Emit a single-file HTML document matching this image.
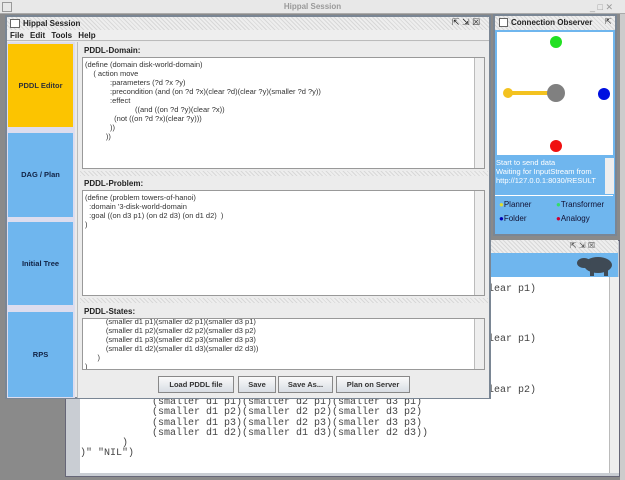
<!DOCTYPE html>
<html><head><style>
*{margin:0;padding:0;box-sizing:border-box}
body{width:625px;height:480px;position:relative;overflow:hidden;background:#8a8a8a;font-family:"Liberation Sans",sans-serif;font-size:8px;color:#222}
.a{position:absolute}
.mono{font-family:"Liberation Mono",monospace;font-size:10px;color:#444;white-space:pre;line-height:10.3px}
.ta{background:#fff;border:1px solid #999}
.sb{position:absolute;right:0;top:0;bottom:0;width:10px;background:#eee;border-left:1px solid #bbb}
.txt{white-space:pre;line-height:9px;font-size:7.5px;color:#333;padding:2px}
.lbl{font-weight:bold;font-size:8px;color:#222}
.btn{position:absolute;top:376px;height:17px;border:1px solid #888;background:linear-gradient(#fafafa,#d8dde4);font-size:7.5px;font-weight:bold;text-align:center;line-height:15px;color:#333}
.tab{position:absolute;left:8px;width:65px;font-weight:bold;font-size:7.5px;text-align:center}
.hatch{background:repeating-linear-gradient(45deg,#d8d8d8 0 1px,#eee 1px 3px)}
</style></head><body>
<div class="a" style="left:0;top:0;width:625px;height:14px;background:#e8e8e8;border-bottom:1px solid #aaa"></div>
<div class="a" style="left:2px;top:2px;width:10px;height:10px;border:1px solid #999"></div>
<div class="a" style="left:0;top:2px;width:625px;text-align:center;font-size:8px;font-weight:bold;color:#999">Hippal Session</div>
<div class="a" style="left:590px;top:2px;font-size:9px;color:#999">_ □ ✕</div>
<div class="a" style="left:620px;top:14px;width:5px;height:466px;background:#ccc"></div>

<div class="a" style="left:65px;top:240px;width:555px;height:237px;background:#c9cdd3;border:1px solid #667"></div>
<div class="a hatch" style="left:490px;top:240px;width:128px;height:13px"></div>
<div class="a" style="left:570px;top:241px;font-size:8px;color:#444">⇱ ⇲ ☒</div>
<div class="a" style="left:490px;top:253px;width:128px;height:24px;background:#6fb6ee"></div>
<svg class="a" style="left:568px;top:253px" width="48" height="24"><ellipse cx="30" cy="12" rx="14" ry="8" fill="#3f4a55"/><ellipse cx="16" cy="10" rx="7" ry="5" fill="#3f4a55"/><rect x="22" y="16" width="4" height="7" fill="#3f4a55"/><rect x="36" y="16" width="4" height="7" fill="#3f4a55"/></svg>
<div class="a" style="left:80px;top:277px;width:529px;height:196px;background:#fff"></div>
<div class="a" style="left:609px;top:277px;width:10px;height:196px;background:#eee;border-left:1px solid #bbb"></div>
<div class="a mono" style="left:488px;top:285px">lear p1)</div>
<div class="a mono" style="left:488px;top:335px">lear p1)</div>
<div class="a mono" style="left:488px;top:386px">lear p2)</div>
<div class="a mono" style="left:80px;top:398px">            (smaller d1 p1)(smaller d2 p1)(smaller d3 p1)
            (smaller d1 p2)(smaller d2 p2)(smaller d3 p2)
            (smaller d1 p3)(smaller d2 p3)(smaller d3 p3)
            (smaller d1 d2)(smaller d1 d3)(smaller d2 d3))
       )
)" "NIL")</div>

<div class="a" style="left:493px;top:14px;width:124px;height:222px;background:#6fb6ee;border:2px solid #7a8694"></div>
<div class="a hatch" style="left:495px;top:16px;width:120px;height:14px"></div>
<div class="a" style="left:499px;top:18px;width:9px;height:9px;border:1px solid #666;background:#fff"></div>
<div class="a lbl" style="left:511px;top:18px">Connection Observer</div>
<div class="a" style="left:605px;top:17px;font-size:8px">⇱</div>
<svg class="a" style="left:497px;top:32px" width="116" height="123"><rect width="116" height="123" fill="#fff"/><line x1="11" y1="61" x2="59" y2="61" stroke="#f3c21f" stroke-width="4"/><circle cx="11" cy="61" r="5" fill="#f3c21f"/><circle cx="59" cy="61" r="9" fill="#808080"/><circle cx="59" cy="10" r="6" fill="#22e022"/><circle cx="107" cy="62" r="6" fill="#0010e0"/><circle cx="59" cy="114" r="6" fill="#f01010"/></svg>
<div class="a" style="left:495px;top:157px;width:118px;height:38px;font-size:7.5px;line-height:9px;color:#fff;padding:1px;white-space:pre;overflow:hidden">Start to send data
Waiting for InputStream from
http://127.0.0.1:8030/RESULT</div>
<div class="a" style="left:605px;top:158px;width:9px;height:36px;background:#eee"></div>
<div class="a" style="left:495px;top:195px;width:118px;height:1px;background:#fff"></div>
<div class="a" style="left:499px;top:200px;font-size:8px;color:#113"><span style="color:#dd3">●</span>Planner</div>
<div class="a" style="left:556px;top:200px;font-size:8px;color:#113"><span style="color:#3d6">●</span>Transformer</div>
<div class="a" style="left:499px;top:214px;font-size:8px;color:#113"><span style="color:#00b">●</span>Folder</div>
<div class="a" style="left:556px;top:214px;font-size:8px;color:#113"><span style="color:#c03">●</span>Analogy</div>

<div class="a" style="left:5px;top:15px;width:486px;height:384px;background:#eaeaea;border:2px solid #7a8694"></div>
<div class="a hatch" style="left:7px;top:17px;width:482px;height:13px"></div>
<div class="a" style="left:10px;top:19px;width:10px;height:9px;border:1px solid #666;background:#fff"></div>
<div class="a lbl" style="left:23px;top:19px">Hippal Session</div>
<div class="a" style="left:452px;top:17px;font-size:9px">⇱ ⇲ ☒</div>
<div class="a" style="left:7px;top:30px;width:482px;height:11px;background:#eee;border-bottom:1px solid #bbb"></div>
<div class="a lbl" style="left:10px;top:31px;word-spacing:4px">File Edit Tools Help</div>
<div class="a" style="left:7px;top:42px;width:68px;height:356px;background:#dde"></div>
<div class="tab" style="top:44px;height:83px;background:#fcc400;line-height:83px;color:#333">PDDL Editor</div>
<div class="tab" style="top:133px;height:84px;background:#6fb6ee;line-height:84px;color:#124">DAG / Plan</div>
<div class="tab" style="top:222px;height:83px;background:#6fb6ee;line-height:83px;color:#124">Initial Tree</div>
<div class="tab" style="top:312px;height:85px;background:#6fb6ee;line-height:85px;color:#124">RPS</div>
<div class="a" style="left:77px;top:42px;width:412px;height:356px;background:#ececec;border-left:1px solid #bbb"></div>

<div class="a lbl" style="left:84px;top:46px">PDDL-Domain:</div>
<div class="a ta" style="left:82px;top:57px;width:403px;height:112px"><div class="txt">(define (domain disk-world-domain)
    ( action move
            :parameters (?d ?x ?y)
            :precondition (and (on ?d ?x)(clear ?d)(clear ?y)(smaller ?d ?y))
            :effect
                        ((and ((on ?d ?y)(clear ?x))
              (not ((on ?d ?x)(clear ?y)))
            ))
          ))</div><div class="sb"></div></div>
<div class="a hatch" style="left:80px;top:171px;width:408px;height:5px"></div>
<div class="a lbl" style="left:84px;top:179px">PDDL-Problem:</div>
<div class="a ta" style="left:82px;top:190px;width:403px;height:106px"><div class="txt">(define (problem towers-of-hanoi)
  :domain '3-disk-world-domain
  :goal ((on d3 p1) (on d2 d3) (on d1 d2)  )
)</div><div class="sb"></div></div>
<div class="a hatch" style="left:80px;top:298px;width:408px;height:5px"></div>
<div class="a lbl" style="left:84px;top:307px">PDDL-States:</div>
<div class="a ta" style="left:82px;top:318px;width:403px;height:52px;overflow:hidden"><div class="txt" style="margin-top:-4px">          (smaller d1 p1)(smaller d2 p1)(smaller d3 p1)
          (smaller d1 p2)(smaller d2 p2)(smaller d3 p2)
          (smaller d1 p3)(smaller d2 p3)(smaller d3 p3)
          (smaller d1 d2)(smaller d1 d3)(smaller d2 d3))
      )
)</div><div class="sb"></div></div>
<div class="btn" style="left:158px;width:76px">Load PDDL file</div>
<div class="btn" style="left:238px;width:38px">Save</div>
<div class="btn" style="left:278px;width:55px">Save As...</div>
<div class="btn" style="left:336px;width:74px">Plan on Server</div>
</body></html>
